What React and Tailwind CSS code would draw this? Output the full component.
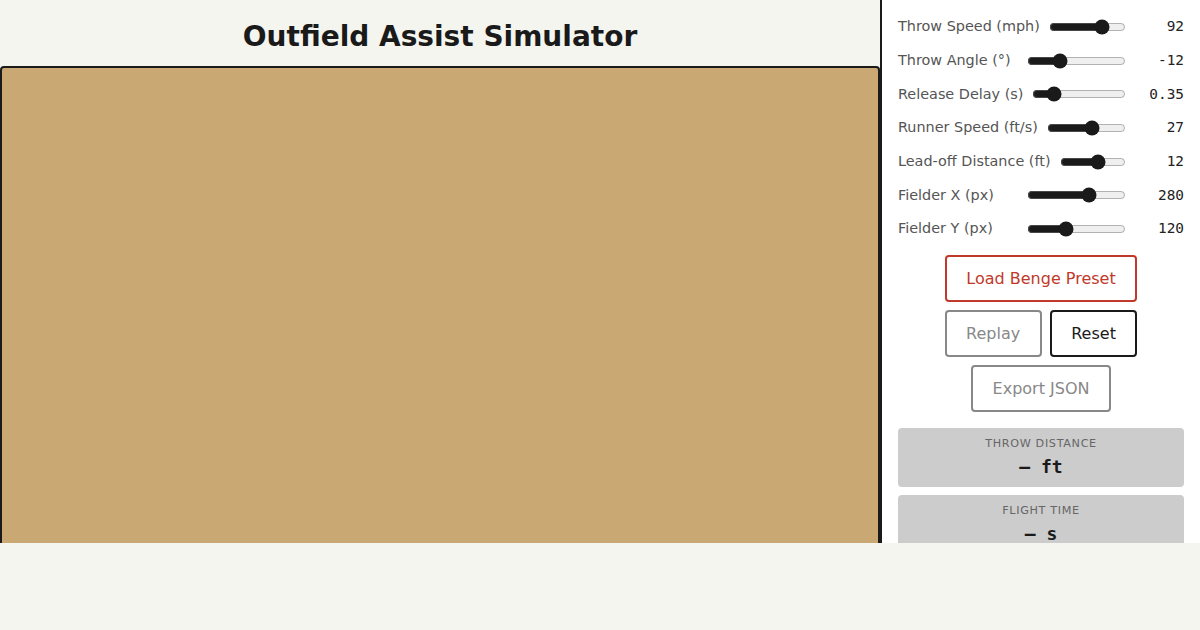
import React, { useState } from 'react';

const sliders = [
  { key: 'speed', label: 'Throw Speed (mph)', min: 40, max: 110, step: 1, value: 92, fmt: (v) => v },
  { key: 'angle', label: 'Throw Angle (°)', min: -30, max: 30, step: 1, value: -12, fmt: (v) => v },
  { key: 'delay', label: 'Release Delay (s)', min: 0, max: 2, step: 0.05, value: 0.35, fmt: (v) => Number(v).toFixed(2) },
  { key: 'runner', label: 'Runner Speed (ft/s)', min: 20, max: 32, step: 1, value: 27, fmt: (v) => v },
  { key: 'lead', label: 'Lead-off Distance (ft)', min: 0, max: 20, step: 1, value: 12, fmt: (v) => v },
  { key: 'fx', label: 'Fielder X (px)', min: 0, max: 430, step: 1, value: 280, fmt: (v) => v },
  { key: 'fy', label: 'Fielder Y (px)', min: 0, max: 320, step: 1, value: 120, fmt: (v) => v },
];

const Stat = ({ label, value }) => (
  <div className="bg-[#cccccc] rounded-[4px] pt-[9px] pb-[9px] text-center">
    <div className="text-[11.2px] leading-[14px] tracking-[0.06em] text-[#666] uppercase">{label}</div>
    <div className="mt-[5px] text-[18px] leading-[22px] font-bold text-[#1a1a1a] font-['DejaVu_Sans_Mono',monospace]">{value}</div>
  </div>
);

export default function App() {
  const [vals, setVals] = useState(Object.fromEntries(sliders.map((s) => [s.key, s.value])));

  return (
    <div className="min-h-[630px] bg-[#f4f5ef] font-['DejaVu_Sans',sans-serif]">
      <div className="flex h-[543px] overflow-hidden">
        <main className="w-[880px] flex flex-col">
          <h1 className="text-center text-[28px] leading-[34px] font-bold text-[#1a1a1a] pt-5 pb-3">
            Outfield Assist Simulator
          </h1>
          <div className="flex-1 min-h-[600px] bg-[#c9a874] border-2 border-[#1a1a1a] rounded-t-[4px]" />
        </main>
        <aside className="w-[320px] bg-white border-l-2 border-[#1a1a1a] px-4 pt-[17px]">
          <div className="flex flex-col gap-[13.7px]">
            {sliders.map((s) => (
              <div key={s.key} className="flex items-center h-5 gap-[9px]">
                <label className="min-w-[120px] text-[14.4px] text-[#555] whitespace-nowrap">{s.label}</label>
                <input
                  type="range"
                  min={s.min}
                  max={s.max}
                  step={s.step}
                  value={vals[s.key]}
                  onChange={(e) => setVals({ ...vals, [s.key]: e.target.value })}
                  className="flex-1 min-w-0 m-0 accent-[#1a1a1a]"
                />
                <span className="w-[49px] text-right text-[14.4px] text-[#222] font-['DejaVu_Sans_Mono',monospace]">
                  {s.fmt(vals[s.key])}
                </span>
              </div>
            ))}
          </div>
          <div className="flex flex-wrap justify-center gap-2 mt-4">
            <button className="border-2 border-[#c0392b] text-[#c0392b] rounded-[4px] px-[19px] py-3 text-[16px] leading-[19px] bg-white">
              Load Benge Preset
            </button>
            <button className="border-2 border-[#888] text-[#888] rounded-[4px] px-[19.5px] py-3 text-[16px] leading-[19px] bg-white">
              Replay
            </button>
            <button className="border-2 border-[#1a1a1a] text-[#1a1a1a] rounded-[4px] px-[19.5px] py-3 text-[16px] leading-[19px] bg-white">
              Reset
            </button>
            <button className="border-2 border-[#888] text-[#888] rounded-[4px] px-5 py-3 text-[16px] leading-[19px] bg-white">
              Export JSON
            </button>
          </div>
          <div className="flex flex-col gap-2 mt-4">
            <Stat label="Throw Distance" value="— ft" />
            <Stat label="Flight Time" value="— s" />
          </div>
        </aside>
      </div>
    </div>
  );
}
